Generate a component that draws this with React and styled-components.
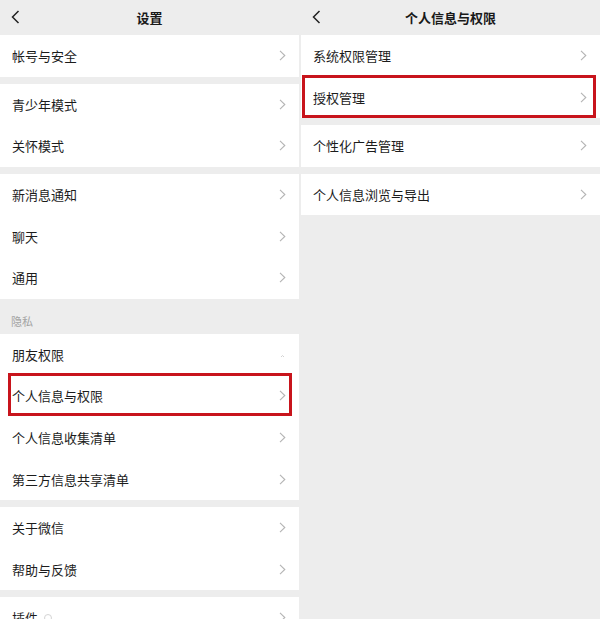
import { Fragment } from 'react';
import styled, { createGlobalStyle } from 'styled-components';

const GlobalStyle = createGlobalStyle`
  html, body {
    margin: 0;
    padding: 0;
    background: #ededed;
  }
  body {
    font-family: "Noto Sans CJK SC", "Noto Sans", sans-serif;
    -webkit-font-smoothing: antialiased;
  }
`;

const settingsGroups = [
  { items: ['帐号与安全'] },
  { items: ['青少年模式', '关怀模式'] },
  { items: ['新消息通知', '聊天', '通用'] },
  {
    label: '隐私',
    items: ['朋友权限', '个人信息与权限', '个人信息收集清单', '第三方信息共享清单'],
  },
  { items: ['关于微信', '帮助与反馈'] },
  { items: ['插件'] },
];

const privacyGroups = [
  { items: ['系统权限管理', '授权管理'] },
  { items: ['个性化广告管理'] },
  { items: ['个人信息浏览与导出'] },
];

const Screen = styled.div`
  display: grid;
  grid-template-columns: 299px 299px;
  column-gap: 2px;
  width: 600px;
  height: 619px;
  overflow: hidden;
  background: #ededed;
`;

const Panel = styled.section`
  display: flex;
  flex-direction: column;
  background: #ededed;
`;

const NavBar = styled.header`
  position: relative;
  display: flex;
  align-items: center;
  justify-content: center;
  height: 35px;
  flex-shrink: 0;
  background: #ededed;
`;

const BackButton = styled.span`
  position: absolute;
  left: 11px;
  top: 10px;
  display: flex;
`;

const Title = styled.h1`
  margin: 0;
  font-size: 13px;
  font-weight: 700;
  color: #191919;
`;

const Group = styled.div`
  display: flex;
  flex-direction: column;
  flex-shrink: 0;
  margin-top: ${({ $flush }) => ($flush ? 0 : 7)}px;
  background: #fff;
`;

const SectionLabel = styled.div`
  height: 35px;
  flex-shrink: 0;
  padding: 14px 0 0 11px;
  box-sizing: border-box;
  font-size: 11px;
  color: #a3a3a3;
  background: #ededed;
`;

const Row = styled.div`
  position: relative;
  display: flex;
  align-items: center;
  height: 41.6px;
  padding: 0 13px 0 12px;
  box-sizing: border-box;
  font-size: 13px;
  color: #1c1c1c;

  ${({ $mark }) =>
    $mark &&
    `
    &::after {
      content: '';
      position: absolute;
      left: ${$mark.left}px;
      right: ${$mark.right}px;
      top: ${$mark.top}px;
      bottom: ${$mark.bottom}px;
      border: 3px solid #c8141c;
      pointer-events: none;
    }
  `}
`;

const RowText = styled.span`
  flex: 1;
  display: flex;
  align-items: center;
  gap: 6px;
`;

const PluginBadge = styled.span`
  width: 8px;
  height: 8px;
  border: 1px solid #d4d4d4;
  border-radius: 50%;
  box-sizing: border-box;
`;

const Chevron = ({ faint }) => (
  <svg width="7" height="11" viewBox="0 0 7 11">
    {faint ? (
      <polyline points="2,8 3.5,6.5 5,8" fill="none" stroke="#d2d2d2" strokeWidth="1" />
    ) : (
      <polyline points="1,0.8 5.8,5.5 1,10.2" fill="none" stroke="#b4b4b4" strokeWidth="1.1" />
    )}
  </svg>
);

const BackIcon = () => (
  <svg width="9" height="14" viewBox="0 0 9 14">
    <polyline points="7.5,1 1.5,7 7.5,13" fill="none" stroke="#222" strokeWidth="1.5" />
  </svg>
);

const SettingsPanel = ({ title, groups, marks }) => (
  <Panel>
    <NavBar>
      <BackButton>
        <BackIcon />
      </BackButton>
      <Title>{title}</Title>
    </NavBar>
    {groups.map((group, i) => (
      <Fragment key={i}>
        {group.label && <SectionLabel>{group.label}</SectionLabel>}
        <Group $flush={i === 0 || Boolean(group.label)}>
          {group.items.map((item) => (
            <Row key={item} $mark={marks[item]}>
              <RowText>
                {item}
                {item === '插件' && <PluginBadge />}
              </RowText>
              <Chevron faint={item === '朋友权限'} />
            </Row>
          ))}
        </Group>
      </Fragment>
    ))}
  </Panel>
);

export default function App() {
  return (
    <>
      <GlobalStyle />
      <Screen>
        <SettingsPanel
          title="设置"
          groups={settingsGroups}
          marks={{ 个人信息与权限: { left: 8, right: 7, top: -2, bottom: 1 } }}
        />
        <SettingsPanel
          title="个人信息与权限"
          groups={privacyGroups}
          marks={{ 授权管理: { left: 1, right: 4, top: -1.5, bottom: 0 } }}
        />
      </Screen>
    </>
  );
}
